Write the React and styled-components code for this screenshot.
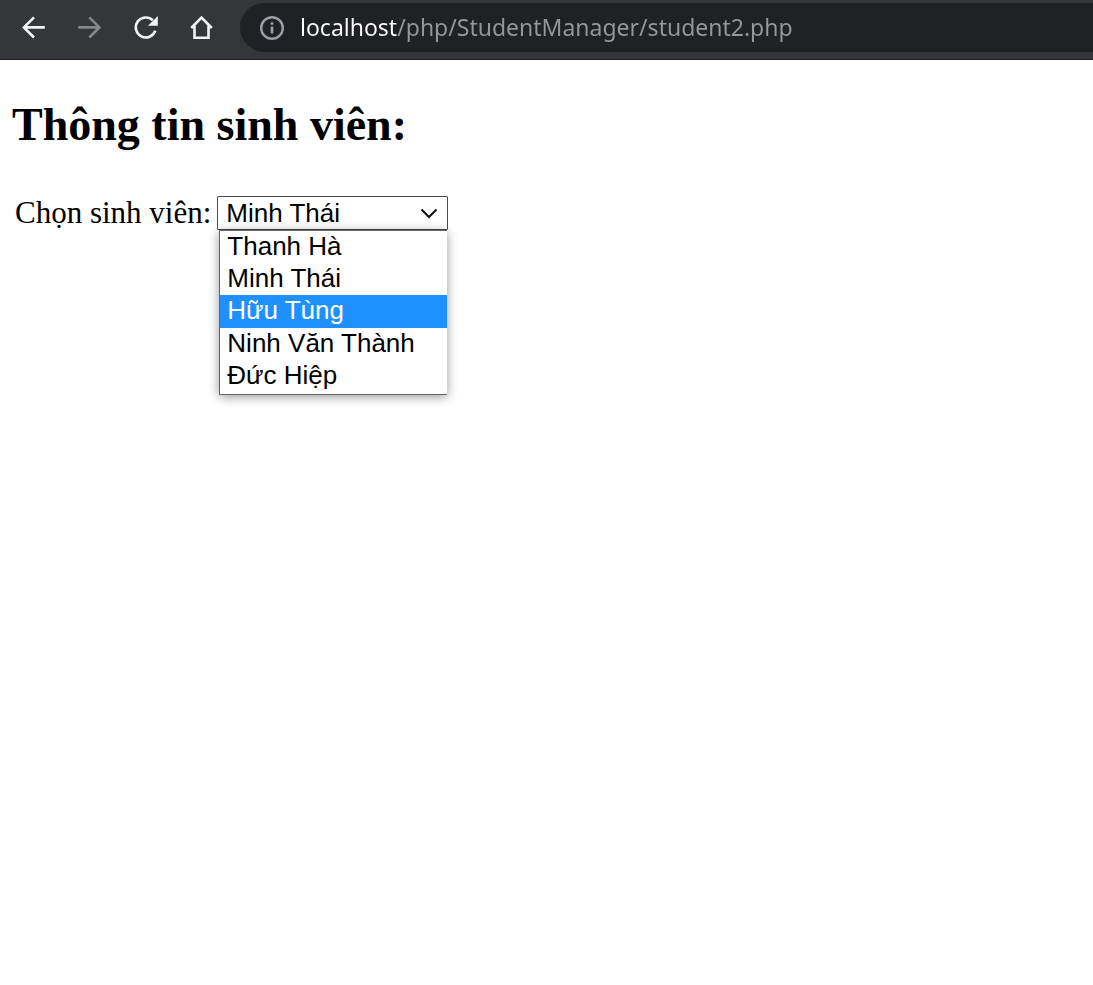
import React from 'react';
import styled, { createGlobalStyle } from 'styled-components';

const GlobalStyle = createGlobalStyle`
  * { box-sizing: border-box; }
  body {
    margin: 0;
    background: #fff;
    color: #000;
    font-family: "Liberation Serif", "Times New Roman", serif;
  }
`;

const Page = styled.div`
  display: flex;
  flex-direction: column;
  min-height: 100vh;
`;

const Toolbar = styled.header`
  display: flex;
  align-items: flex-start;
  padding: 3px 0 7px 5px;
  background: #35363a;
  border-bottom: 1px solid #202124;
`;

const NavButton = styled.button`
  display: flex;
  align-items: center;
  justify-content: center;
  flex: none;
  width: 56px;
  height: 49px;
  padding: 0;
  border: 0;
  background: none;
  color: ${(p) => (p.disabled ? '#86878a' : '#f1f3f4')};
`;

const AddressBar = styled.div`
  display: flex;
  align-items: center;
  flex: 1;
  min-width: 0;
  height: 49px;
  margin-left: 11px;
  padding-left: 18px;
  gap: 14px;
  border-radius: 25px 0 0 25px;
  background: #202124;
  color: #9aa0a6;
`;

const InfoButton = styled.button`
  display: flex;
  flex: none;
  padding: 0;
  border: 0;
  background: none;
  color: inherit;
`;

/* The host part is white, the path part is grey. */
const AddressInput = styled.input`
  flex: 1;
  min-width: 0;
  height: 40px;
  padding: 0 0 2px;
  border: 0;
  outline: 0;
  background: linear-gradient(90deg, #fff 97px, #959799 97px);
  -webkit-background-clip: text;
  background-clip: text;
  color: transparent;
  font: 23px "Noto Sans", "Segoe UI", sans-serif;
`;

const Content = styled.main`
  flex: 1;
  padding: 38px 12px;
`;

const Title = styled.h2`
  margin: 0;
  font-size: 46px;
  line-height: 54px;
`;

const Form = styled.form`
  display: flex;
  align-items: center;
  gap: 6px;
  margin-top: 44px;
  padding-left: 3px;
`;

const Label = styled.label`
  font-size: 31px;
  line-height: 34px;
`;

const SelectBox = styled.div`
  position: relative;
  width: 231px;
`;

const Select = styled.select`
  display: block;
  appearance: none;
  width: 100%;
  height: 34px;
  padding: 0 32px 0 8px;
  border: 1px solid #4a4a4a;
  border-radius: 1px;
  outline: 0;
  background: #fff;
  color: #000;
  font: 26px "Liberation Sans", Arial, sans-serif;
`;

const Chevron = styled.svg`
  position: absolute;
  top: 12px;
  right: 10px;
  pointer-events: none;
`;

const Options = styled.ul`
  position: absolute;
  top: 100%;
  left: 2px;
  right: 1px;
  display: flex;
  flex-direction: column;
  height: 165px;
  margin: 0;
  padding: 0 0 2px;
  border: solid #666;
  border-width: 1px 0 1px 1px;
  background: #fff;
  box-shadow: 0 2px 10px rgba(0, 0, 0, 0.4);
  list-style: none;
`;

const Option = styled.li`
  flex: 1;
  padding-left: 7px;
  background: ${(p) => (p.$active ? '#1e90ff' : 'transparent')};
  color: ${(p) => (p.$active ? '#fff' : '#000')};
  font: 26px/30px "Liberation Sans", Arial, sans-serif;
`;

const students = ['Thanh Hà', 'Minh Thái', 'Hữu Tùng', 'Ninh Văn Thành', 'Đức Hiệp'];

const Icon = ({ children }) => (
  <svg width="28" height="28" viewBox="0 0 28 28" fill="none" stroke="currentColor" strokeWidth="2.6" aria-hidden="true">
    {children}
  </svg>
);

export default function App() {
  return (
    <Page>
      <GlobalStyle />
      <Toolbar>
        <NavButton aria-label="Back">
          <Icon><path d="M25.8 13.4H5.500M15 3.300L4.900 13.400 15 23.500" /></Icon>
        </NavButton>
        <NavButton aria-label="Forward" disabled>
          <Icon><path d="M3.200 13.400H24M14.300 3.300l10.100 10.100-10.100 10.100" /></Icon>
        </NavButton>
        <NavButton aria-label="Reload">
          <Icon>
            <path d="M24.300 16.600A10 10 0 1 1 21.800 6.300" />
            <path d="M26.800 2v9.800H17z" fill="currentColor" stroke="none" />
          </Icon>
        </NavButton>
        <NavButton aria-label="Home">
          <Icon><path d="M4.200 14L14.500 3.600 24.800 14M7.500 11.500v12.300h14V11.500" /></Icon>
        </NavButton>
        <AddressBar>
          <InfoButton aria-label="Site information">
            <Icon>
              <circle cx="14" cy="14" r="10.8" strokeWidth="2.4" />
              <path d="M14 12.600v7M14 8.200v2.600" />
            </Icon>
          </InfoButton>
          <AddressInput aria-label="Address" defaultValue="localhost/php/StudentManager/student2.php" spellCheck={false} />
        </AddressBar>
      </Toolbar>
      <Content>
        <Title>Thông tin sinh viên:</Title>
        <Form>
          <Label htmlFor="student">Chọn sinh viên:</Label>
          <SelectBox>
            <Select id="student" defaultValue="Minh Thái">
              {students.map((name) => <option key={name}>{name}</option>)}
            </Select>
            <Chevron width="18" height="12" viewBox="0 0 18 12" fill="none" stroke="#111" strokeWidth="2" aria-hidden="true">
              <path d="M1.500 1.500L9 9l7.500-7.500" />
            </Chevron>
            <Options role="listbox" aria-label="Chọn sinh viên">
              {students.map((name) => (
                <Option key={name} role="option" aria-selected={name === 'Minh Thái'} $active={name === 'Hữu Tùng'}>
                  {name}
                </Option>
              ))}
            </Options>
          </SelectBox>
        </Form>
      </Content>
    </Page>
  );
}
